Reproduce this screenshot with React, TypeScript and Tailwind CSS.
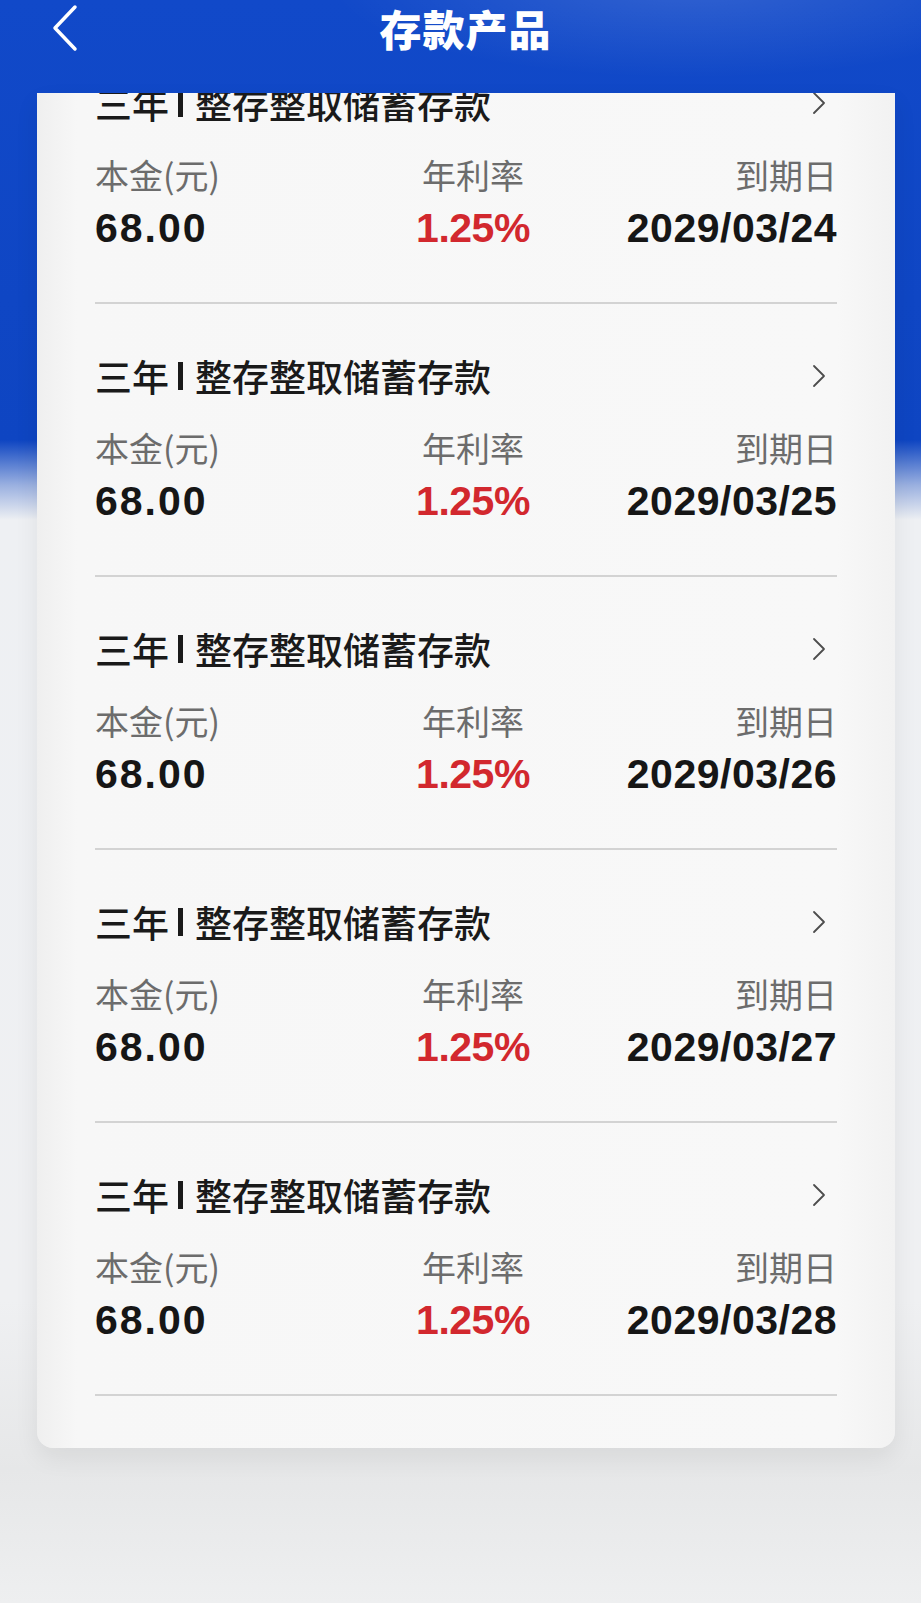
import React from "react";

const dates = ["2029/03/24", "2029/03/25", "2029/03/26", "2029/03/27", "2029/03/28"];

function Row({ date }: { date: string }) {
  return (
    <div className="pt-[52px]">
      <div className="flex h-[40px] items-center justify-between">
        <div className="flex items-center text-[37px] leading-[40px] font-medium text-[#1a1a1a]">
          <span>三年</span>
          <span className="ml-[9px] mr-[12px] inline-block h-[28px] w-[5px] shrink-0 bg-[#1a1a1a]" />
          <span>整存整取储蓄存款</span>
        </div>
        <svg width="14" height="24" viewBox="0 0 14 24" className="mr-[11px]">
          <path d="M2 2 L12 12 L2 22" fill="none" stroke="#4d4d4d" strokeWidth="1.8" strokeLinecap="round" strokeLinejoin="round" />
        </svg>
      </div>
      <div className="mt-[32px] grid h-[40px] grid-cols-3 text-[34px] leading-[40px] text-[#6c6c6c]">
        <div>本金(元)</div>
        <div className="pl-[14px] text-center">年利率</div>
        <div className="text-right">到期日</div>
      </div>
      <div className="mt-[11px] grid h-[44px] grid-cols-3 font-['Liberation_Sans',Arial,sans-serif] text-[41px] leading-[44px] font-bold">
        <div className="tracking-[2px] text-[#161616]">68.00</div>
        <div className="pl-[14px] text-center tracking-[-0.5px] text-[#d2282e]">1.25%</div>
        <div className="text-right tracking-[0.5px] text-[#161616]">{date}</div>
      </div>
      <div className="mt-[52px] h-[2px] bg-[#d3d3d3]" />
    </div>
  );
}

export default function App() {
  return (
    <div className="relative h-[1603px] w-[921px] overflow-hidden bg-[linear-gradient(180deg,#1149c9_0px,#0f46c4_300px,#0e45c2_440px,#9ab0e0_485px,#eef0f3_520px,#eff0f2_1300px,#e6e7e8_1470px,#eeeff0_1603px)] font-['Noto_Sans_CJK_SC',sans-serif]">
      <header className="h-[93px] bg-[radial-gradient(ellipse_520px_140px_at_75%_-20px,rgba(255,255,255,0.14),rgba(255,255,255,0)_70%)]">
        <div className="grid h-[56px] grid-cols-[1fr_auto_1fr] items-center">
          <div className="pl-[50px]">
            <svg width="30" height="48" viewBox="0 0 30 48">
              <path d="M25 3 L5 24 L25 45" fill="none" stroke="#ffffff" strokeWidth="3.5" strokeLinecap="round" strokeLinejoin="round" />
            </svg>
          </div>
          <h1 className="pl-[10px] text-[42px] leading-[48px] font-black tracking-[1px] text-white">存款产品</h1>
          <div />
        </div>
      </header>
      <main className="ml-[37px] mr-[26px] overflow-hidden rounded-b-[16px] bg-[linear-gradient(90deg,#efefef_0px,#f7f7f7_40px,#f8f8f8_800px,#f2f2f2_100%)] shadow-[0_10px_24px_rgba(0,0,0,0.07)]">
        <div className="-mt-[62px] px-[58px] pb-[52px]">
          {dates.map((d) => (
            <Row key={d} date={d} />
          ))}
        </div>
      </main>
    </div>
  );
}
